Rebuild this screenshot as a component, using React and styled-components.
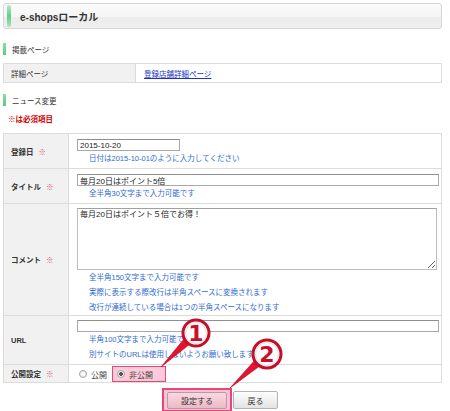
import styled, { createGlobalStyle } from "styled-components";

const GlobalStyle = createGlobalStyle`
  html, body {
    margin: 0;
    padding: 0;
    background: #fff;
  }
  body {
    font-family: "Liberation Sans", "Noto Sans CJK JP", sans-serif;
    color: #333;
  }
`;

// Layout

const Root = styled.div`
  position: relative;
  width: 450px;
  height: 411px;
  overflow: hidden;
`;

const Page = styled.div`
  width: 439px;
  padding: 3px 0 0 3px;
  font-size: 7.5px;
`;

// Title bar

const TitleBar = styled.div`
  box-sizing: border-box;
  height: 26px;
  display: flex;
  align-items: center;
  gap: 9px;
  padding-left: 3px;
  border: 1px solid #d6d6d6;
  border-radius: 3px;
  background: linear-gradient(#fbfbfb 0%, #f5f5f5 55%, #ececec 56%, #efefef 100%);
`;

const TitleMark = styled.span`
  width: 4px;
  height: 22px;
  border-radius: 2px;
  background: linear-gradient(#b6ecc6, #62cc84 50%, #a6e6b8);
`;

const TitleText = styled.h1`
  margin: 0;
  font-size: 10px;
  font-weight: bold;
  color: #333;
`;

// Section heading

const Heading = styled.h2`
  display: flex;
  align-items: center;
  gap: 6px;
  height: 12px;
  margin: ${(p) => p.$top}px 0 0;
  font-size: 7.5px;
  font-weight: normal;
  color: #333;
  &::before {
    content: "";
    width: 3px;
    height: 100%;
    background: linear-gradient(#8ddda3, #5cc97e);
  }
`;

const RequiredNote = styled.p`
  margin: 8px 0 0 5px;
  line-height: 12px;
  font-size: 7.5px;
  font-weight: bold;
  color: #d20000;
`;

// Tables

const Table = styled.table`
  width: 439px;
  margin-top: ${(p) => p.$top}px;
  border-collapse: collapse;
  border: 1px solid #dcdcdc;
  table-layout: fixed;
`;

const LabelCell = styled.th`
  width: ${(p) => p.$width}px;
  box-sizing: border-box;
  padding: 0 0 0 7px;
  border: 1px solid #dcdcdc;
  background: #f1f1f1;
  text-align: left;
  vertical-align: middle;
  font-size: 7.5px;
  font-weight: ${(p) => (p.$bold ? "bold" : "normal")};
  color: #333;
  height: ${(p) => p.$height || "auto"};
`;

const ValueCell = styled.td`
  box-sizing: border-box;
  padding: ${(p) => p.$pad || "5px 0 2px 8px"};
  border: 1px solid #dcdcdc;
  background: #fff;
  vertical-align: ${(p) => p.$align || "top"};
`;

const Mark = styled.span`
  margin-left: 5px;
  font-size: 7.5px;
  font-weight: normal;
  color: #e0587a;
`;

const Link = styled.a`
  color: #2230c0;
  text-decoration: underline;
  font-size: 7.5px;
`;

const TextInput = styled.input`
  display: block;
  box-sizing: border-box;
  width: ${(p) => p.$width}px;
  height: 12px;
  margin: 0;
  padding: 0 2px;
  border: 1px solid #a9a9a9;
  border-top-color: #8e8e8e;
  font: inherit;
  font-size: 8px;
  color: #222;
  background: #fff;
`;

const TextArea = styled.textarea`
  display: block;
  box-sizing: border-box;
  width: 360px;
  height: 62px;
  margin: 0;
  padding: 1px 2px;
  border: 1px solid #bdbdbd;
  border-top-color: #a0a0a0;
  font: inherit;
  font-size: 8px;
  line-height: 10px;
  color: #222;
`;

const Hint = styled.div`
  padding-left: 12px;
  line-height: 15px;
  font-size: 7.5px;
  color: #2f6bd0;
`;

// Radio

const RadioGroup = styled.div`
  display: flex;
  align-items: center;
`;

const RadioOption = styled.label`
  display: inline-flex;
  align-items: center;
  gap: 4px;
  box-sizing: border-box;
  height: 16px;
  padding: ${(p) => (p.$marked ? "0 12px 0 4px" : "0 4px 0 1px")};
  border: ${(p) => (p.$marked ? "1.5px solid #e9467c" : "1px solid transparent")};
  background: ${(p) => (p.$marked ? "#fccad8" : "transparent")};
  font-size: 8px;
  color: #444;
`;

const Radio = styled.input.attrs({ type: "radio" })`
  appearance: none;
  width: 8px;
  height: 8px;
  margin: 0;
  border: 1px solid #a5a5a5;
  border-radius: 50%;
  background: radial-gradient(circle, #fff, #e6e6e6);
  &:checked {
    background: radial-gradient(circle, #555 0, #555 1.6px, #f4f4f4 2.2px, #e0e0e0 100%);
  }
`;

// Buttons

const ButtonRow = styled.div`
  display: flex;
  justify-content: center;
  align-items: center;
  gap: 1px;
  margin-top: 5px;
  padding-right: 5px;
`;

const HighlightFrame = styled.span`
  display: inline-flex;
  padding: 2px 3px 1px;
  border: 2px solid #e9457c;
  background: #f8c3d3;
`;

const Button = styled.button`
  box-sizing: border-box;
  width: ${(p) => p.$width}px;
  height: ${(p) => p.$height}px;
  margin: 0;
  padding: 0;
  border: 1px solid ${(p) => (p.$tinted ? "#b89aa4" : "#b3b3b3")};
  border-radius: 2px;
  background: ${(p) =>
    p.$tinted
      ? "linear-gradient(#f9d8e1, #ecbac7)"
      : "linear-gradient(#fefefe, #e3e3e3)"};
  font-family: inherit;
  font-size: 8px;
  color: #333;
`;

// Callouts drawn over the form

const Overlay = styled.svg`
  position: absolute;
  top: 0;
  left: 0;
  pointer-events: none;
`;

const Callout = ({ cx, cy, r, tail, label }) => (
  <g>
    <polygon points={tail} fill="#e3122f" stroke="#b50a22" strokeWidth="0.6" />
    <circle cx={cx} cy={cy} r={r} fill="#fff" stroke="#c40e2a" strokeWidth="3" />
    <circle cx={cx} cy={cy} r={r - 2.6} fill="none" stroke="#f2d0d6" strokeWidth="0.8" />
    <text
      x={cx}
      y={cy + 8}
      textAnchor="middle"
      fontFamily="DejaVu Sans, sans-serif"
      fontWeight="bold"
      fontSize="22"
      fill="#c8102e"
    >
      {label}
    </text>
  </g>
);

export default function App() {
  return (
    <Root>
      <GlobalStyle />
      <Page>
        <TitleBar>
          <TitleMark />
          <TitleText>e-shopsローカル</TitleText>
        </TitleBar>

        <Heading $top={14}>掲載ページ</Heading>
        <Table $top={8}>
          <tbody>
            <tr>
              <LabelCell $width={132} $height="19px">
                詳細ページ
              </LabelCell>
              <ValueCell $pad="0 0 0 8px" $align="middle">
                <Link href="#">登録店舗詳細ページ</Link>
              </ValueCell>
            </tr>
          </tbody>
        </Table>

        <Heading $top={11}>ニュース変更</Heading>
        <RequiredNote>※は必須項目</RequiredNote>

        <Table $top={7}>
          <tbody>
            <tr>
              <LabelCell $width={65} $bold>
                登録日<Mark>※</Mark>
              </LabelCell>
              <ValueCell>
                <TextInput $width={103} defaultValue="2015-10-20" />
                <Hint>日付は2015-10-01のように入力してください</Hint>
              </ValueCell>
            </tr>
            <tr>
              <LabelCell $width={65} $bold>
                タイトル<Mark>※</Mark>
              </LabelCell>
              <ValueCell>
                <TextInput $width={362} defaultValue="毎月20日はポイント5倍" />
                <Hint>全半角30文字まで入力可能です</Hint>
              </ValueCell>
            </tr>
            <tr>
              <LabelCell $width={65} $bold>
                コメント<Mark>※</Mark>
              </LabelCell>
              <ValueCell $pad="4px 0 0 8px">
                <TextArea defaultValue="毎月20日はポイント５倍でお得！" />
                <Hint>全半角150文字まで入力可能です</Hint>
                <Hint>実際に表示する際改行は半角スペースに変換されます</Hint>
                <Hint>改行が連続している場合は1つの半角スペースになります</Hint>
              </ValueCell>
            </tr>
            <tr>
              <LabelCell $width={65} $bold>
                URL
              </LabelCell>
              <ValueCell $pad="4px 0 2px 8px">
                <TextInput $width={362} defaultValue="" />
                <Hint>半角100文字まで入力可能です</Hint>
                <Hint>別サイトのURLは使用しないようお願い致します</Hint>
              </ValueCell>
            </tr>
            <tr>
              <LabelCell $width={65} $bold>
                公開設定<Mark>※</Mark>
              </LabelCell>
              <ValueCell $pad="1px 0 0 8px">
                <RadioGroup>
                  <RadioOption>
                    <Radio name="publish" />
                    公開
                  </RadioOption>
                  <RadioOption $marked>
                    <Radio name="publish" defaultChecked />
                    非公開
                  </RadioOption>
                </RadioGroup>
              </ValueCell>
            </tr>
          </tbody>
        </Table>

        <ButtonRow>
          <HighlightFrame>
            <Button $width={60} $height={17} $tinted>
              設定する
            </Button>
          </HighlightFrame>
          <Button $width={45} $height={18}>
            戻る
          </Button>
        </ButtonRow>
      </Page>

      <Overlay width="450" height="411" viewBox="0 0 450 411">
        <Callout cx={196} cy={333} r={13} tail="184,339 190,344 161,367" label="1" />
        <Callout cx={267} cy={354} r={14} tail="255,360 261,365 230,388" label="2" />
      </Overlay>
    </Root>
  );
}
